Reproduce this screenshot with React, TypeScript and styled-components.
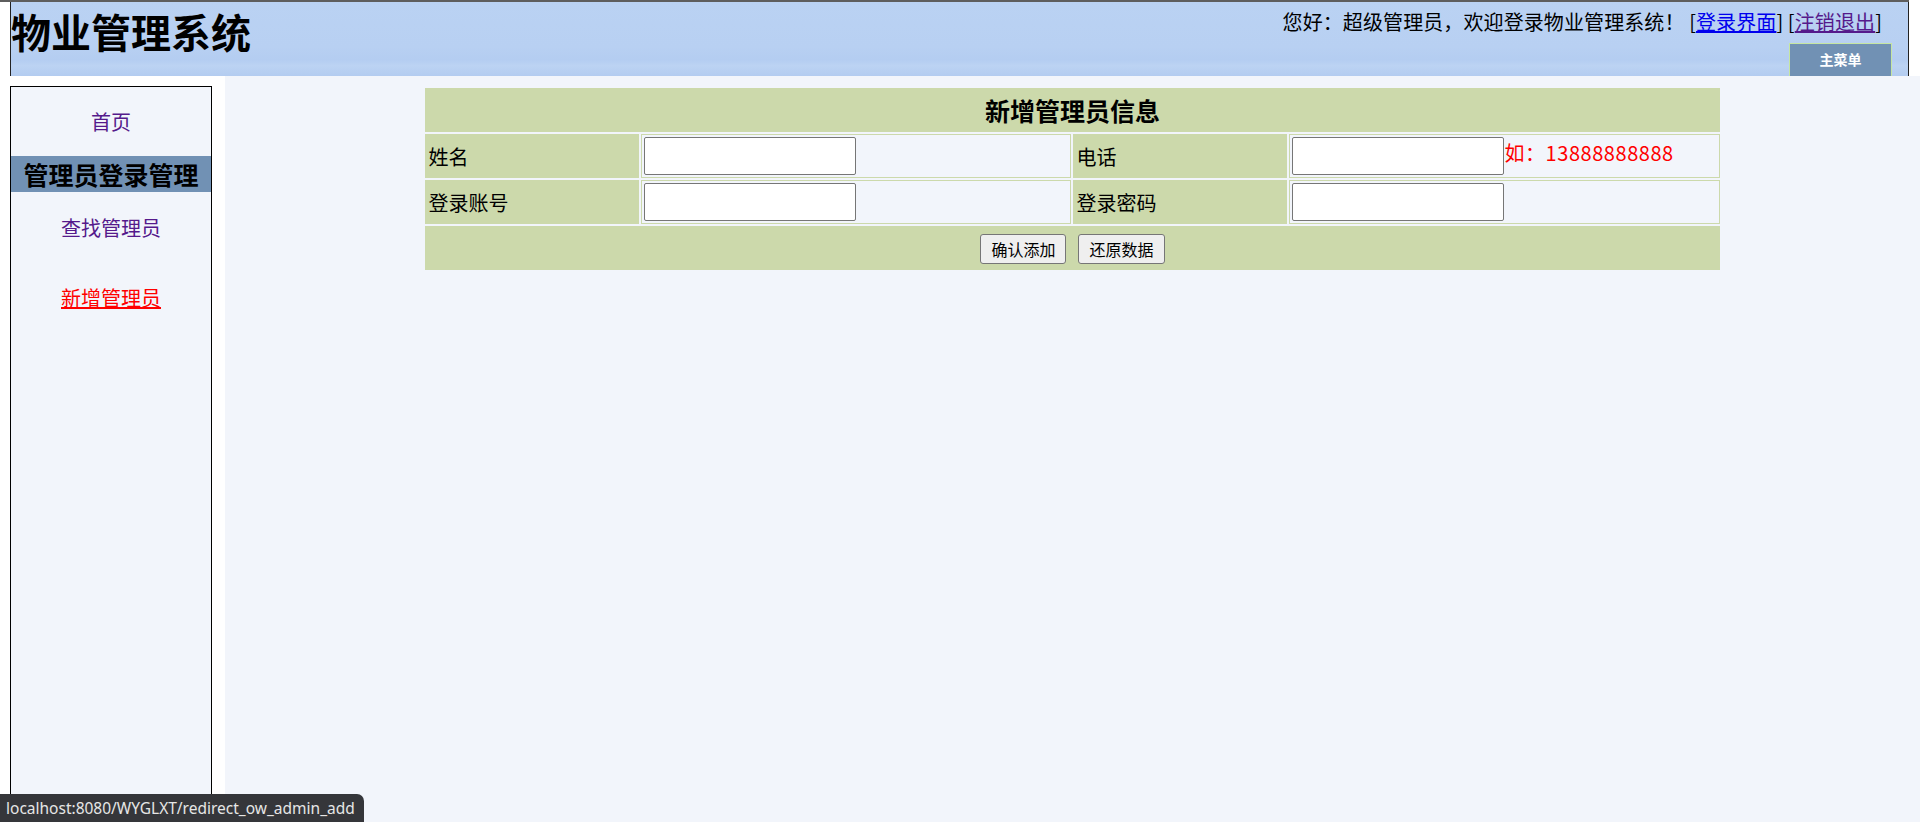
import React from "react";
import styled, { createGlobalStyle } from "styled-components";

const GlobalStyle = createGlobalStyle`
  html, body {
    margin: 0;
    padding: 0;
    background: #ffffff;
    overflow: hidden;
  }
  body {
    font-family: "Noto Sans CJK SC", "Noto Sans", sans-serif;
    font-size: 20px;
    color: #000;
  }
`;

const Page = styled.div`
  width: 1920px;
  height: 822px;
  overflow: hidden;
  display: flex;
  flex-direction: column;
`;

const TopBar = styled.div`
  width: 1909px;
  border-top: 2px solid #5e5e5e;
`;

const Header = styled.header`
  margin-left: 10px;
  height: 74px;
  border-left: 1px solid #222;
  border-right: 1px solid #222;
  background: linear-gradient(180deg, #bad2f3 0%, #b8d0f2 60%, #b4cdf1 78%, #bcd3f3 86%, #b3ccf0 100%);
  display: flex;
  justify-content: space-between;
  overflow: hidden;
`;

const Title = styled.h1`
  margin: 0;
  font-size: 40px;
  font-weight: bold;
  line-height: 58px;
  white-space: nowrap;
`;

const HeaderRight = styled.div`
  display: flex;
  flex-direction: column;
  align-items: flex-end;
`;

const Greeting = styled.div`
  padding: 5px 26px 0 0;
  line-height: 30px;
  letter-spacing: 0.1px;
  white-space: nowrap;
`;

const HeaderLink = styled.a<{ $visited?: boolean }>`
  color: ${(p) => (p.$visited ? "#551a8b" : "#0000ee")};
  text-decoration: underline;
  cursor: pointer;
`;

const MenuButton = styled.div`
  margin: 6px 16px 0 0;
  width: 103px;
  height: 33px;
  box-sizing: border-box;
  border: 1px solid #c6e6a2;
  border-bottom: none;
  background: #7191b4;
  color: #fff;
  font-size: 14px;
  font-weight: bold;
  display: flex;
  align-items: center;
  justify-content: center;
  padding-bottom: 2px;
`;

const Body = styled.div`
  flex: 1;
  display: grid;
  grid-template-columns: 225px 1fr;
  min-height: 0;
`;

const LeftFrame = styled.div`
  background: #fff;
  padding: 10px 13px 0 10px;
`;

const Sidebar = styled.nav`
  height: 760px;
  border: 1px solid #000;
  background: #f2f5fb;
  display: flex;
  flex-direction: column;
`;

const NavItem = styled.a<{ $active?: boolean; $height: number }>`
  height: ${(p) => p.$height}px;
  display: flex;
  align-items: center;
  justify-content: center;
  color: ${(p) => (p.$active ? "#ff0000" : "#551a8b")};
  text-decoration: ${(p) => (p.$active ? "underline" : "none")};
  cursor: pointer;
`;

const NavHeading = styled.div`
  height: 36px;
  background: #7191b4;
  font-size: 25px;
  font-weight: bold;
  display: flex;
  align-items: center;
  justify-content: center;
`;

const MainFrame = styled.main`
  background: #f2f5fb;
  padding-top: 10px;
`;

const FormTable = styled.table`
  width: 1298px;
  margin: 0 auto;
  border-collapse: separate;
  border-spacing: 2px;
  table-layout: fixed;
`;

const TitleCell = styled.th`
  background: #ccd9ab;
  height: 44px;
  padding: 0;
  font-size: 25px;
  font-weight: bold;
  text-align: center;
`;

const Cell = styled.td<{ $kind: "label" | "field" }>`
  padding: 2px 2px 2px 2px;
  vertical-align: middle;
  text-align: left;
  background: ${(p) => (p.$kind === "label" ? "#ccd9ab" : "#f2f5fb")};
  border: 1px solid #ccd9ab;
  white-space: nowrap;
`;

const TextInput = styled.input`
  box-sizing: border-box;
  width: 212px;
  height: 38px;
  border: 1px solid #767676;
  border-radius: 2px;
  background: #fff;
  padding: 0 4px;
  margin: 0;
  font-size: 16px;
  vertical-align: baseline;
`;

const Hint = styled.span`
  color: #ff0000;
  font-size: 20px;
  letter-spacing: 0.55px;
`;

const ActionCell = styled.td`
  background: #ccd9ab;
  height: 44px;
  padding: 0;
  text-align: center;
  vertical-align: middle;
`;

const ActionRow = styled.div`
  display: flex;
  justify-content: center;
  gap: 12px;
  padding-top: 2px;
`;

const FormButton = styled.button`
  box-sizing: border-box;
  height: 30px;
  padding: 0 10px;
  border: 1px solid #767676;
  border-radius: 3px;
  background: #efefef;
  font-family: "Noto Sans CJK SC", sans-serif;
  font-size: 16px;
  color: #000;
  line-height: 28px;
`;

const StatusBubble = styled.div`
  position: fixed;
  left: 0;
  bottom: 0;
  height: 28px;
  padding: 0 9px 0 6px;
  background: #35363a;
  color: #e6e6e6;
  border-top-right-radius: 7px;
  font-family: "Noto Sans", "Open Sans", sans-serif;
  font-size: 15.5px;
  line-height: 28px;
  white-space: nowrap;
`;

const fields = [
  [
    { label: "姓名", hint: "" },
    { label: "电话", hint: "如：13888888888" },
  ],
  [
    { label: "登录账号", hint: "" },
    { label: "登录密码", hint: "" },
  ],
];

const App = () => {
  return (
    <Page>
      <GlobalStyle />
      <TopBar>
        <Header>
          <Title>物业管理系统</Title>
          <HeaderRight>
            <Greeting>
              您好：超级管理员，欢迎登录物业管理系统！ [<HeaderLink>登录界面</HeaderLink>] [
              <HeaderLink $visited>注销退出</HeaderLink>]
            </Greeting>
            <MenuButton>主菜单</MenuButton>
          </HeaderRight>
        </Header>
      </TopBar>
      <Body>
        <LeftFrame>
          <Sidebar>
            <NavItem $height={69}>首页</NavItem>
            <NavHeading>管理员登录管理</NavHeading>
            <NavItem $height={70}>查找管理员</NavItem>
            <NavItem $height={70} $active>
              新增管理员
            </NavItem>
          </Sidebar>
        </LeftFrame>
        <MainFrame>
          <FormTable>
            <colgroup>
              <col style={{ width: 214 }} />
              <col style={{ width: 430 }} />
              <col style={{ width: 214 }} />
              <col style={{ width: 430 }} />
            </colgroup>
            <thead>
              <tr>
                <TitleCell colSpan={4}>新增管理员信息</TitleCell>
              </tr>
            </thead>
            <tbody>
              {fields.map((row, i) => (
                <tr key={i}>
                  {row.map((f) => (
                    <React.Fragment key={f.label}>
                      <Cell $kind="label">{f.label}</Cell>
                      <Cell $kind="field">
                        <TextInput type={f.label === "登录密码" ? "password" : "text"} />
                        {f.hint && <Hint>{f.hint}</Hint>}
                      </Cell>
                    </React.Fragment>
                  ))}
                </tr>
              ))}
              <tr>
                <ActionCell colSpan={4}>
                  <ActionRow>
                    <FormButton>确认添加</FormButton>
                    <FormButton>还原数据</FormButton>
                  </ActionRow>
                </ActionCell>
              </tr>
            </tbody>
          </FormTable>
        </MainFrame>
      </Body>
      <StatusBubble>localhost:8080/WYGLXT/redirect_ow_admin_add</StatusBubble>
    </Page>
  );
};

export default App;
